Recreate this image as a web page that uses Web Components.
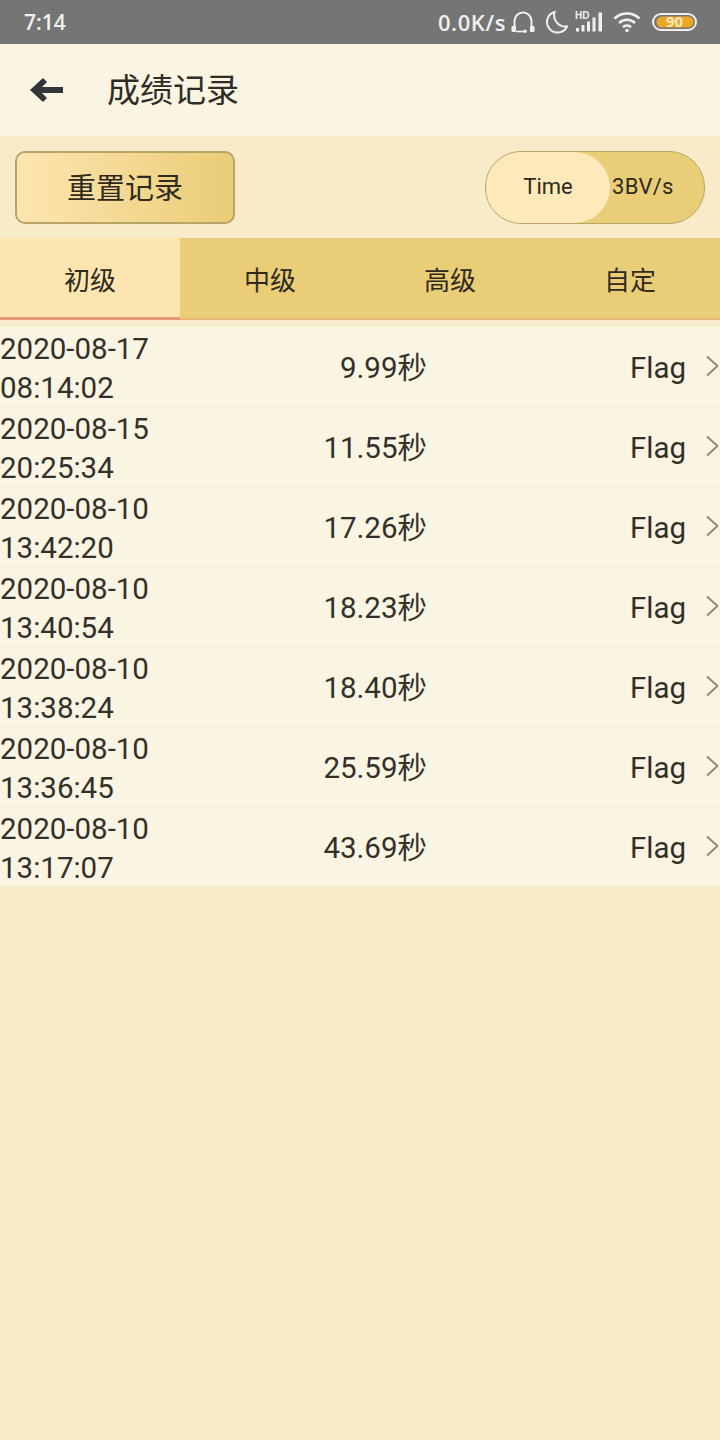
<!DOCTYPE html>
<html lang="zh">
<head>
<meta charset="utf-8">
<title>成绩记录</title>
<style>
  html, body { margin: 0; padding: 0; }
  body {
    width: 720px;
    height: 1440px;
    overflow: hidden;
    background: #f7ebc9;
    color: #2e2a20;
    font-family: Roboto, "Noto Sans CJK SC", sans-serif;
  }
</style>
</head>
<body>
<status-bar></status-bar>
<app-header>成绩记录</app-header>
<record-toolbar></record-toolbar>
<level-tabs></level-tabs>
<record-list>
  <record-row date="2020-08-17" time="08:14:02" score="9.99秒" mode="Flag"></record-row>
  <record-row date="2020-08-15" time="20:25:34" score="11.55秒" mode="Flag"></record-row>
  <record-row date="2020-08-10" time="13:42:20" score="17.26秒" mode="Flag"></record-row>
  <record-row date="2020-08-10" time="13:40:54" score="18.23秒" mode="Flag"></record-row>
  <record-row date="2020-08-10" time="13:38:24" score="18.40秒" mode="Flag"></record-row>
  <record-row date="2020-08-10" time="13:36:45" score="25.59秒" mode="Flag"></record-row>
  <record-row date="2020-08-10" time="13:17:07" score="43.69秒" mode="Flag"></record-row>
</record-list>

<script>
class StatusBar extends HTMLElement {
  constructor() {
    super();
    this.attachShadow({ mode: "open" });
    this.shadowRoot.innerHTML = `
      <style>
        :host {
          display: flex;
          align-items: center;
          justify-content: space-between;
          height: 44px;
          padding: 0 22px 0 24px;
          box-sizing: border-box;
          background: #757575;
          color: #f0f0f0;
          font-family: "Open Sans", Roboto, sans-serif;
          font-weight: 600;
        }
        .clock { font-size: 21px; }
        .right { display: flex; align-items: center; }
        .speed { font-size: 22px; letter-spacing: 0.6px; margin-right: 5px; }
        svg { display: block; flex: none; }
        .hp { margin-right: 10px; }
        .moon { margin-right: 7px; }
        .sig { margin-right: 10px; }
        .wifi { margin-right: 11px; }
      </style>
      <span class="clock">7:14</span>
      <div class="right">
        <span class="speed">0.0K/s</span>
        <svg class="hp" width="24" height="24" viewBox="0 0 24 24" fill="none" stroke="#f0f0f0" stroke-width="2">
          <path d="M3.500 17V11a8.500 8.500 0 0 1 17 0v6"/>
          <path d="M1 16.500h3.500v5H1zM19.500 16.500H23v5h-3.500z" fill="#f0f0f0" stroke-width="1"/>
          <path d="M5 21.500h8" stroke-width="1.600"/><circle cx="14" cy="21.200" r="1.800" fill="#f0f0f0" stroke="none"/>
        </svg>
        <svg class="moon" width="23" height="24" viewBox="0 0 23 24" fill="none" stroke="#f0f0f0" stroke-width="2">
          <path d="M9.500 2A10.500 10.500 0 1 0 22 16.500 11.500 11.500 0 0 1 9.500 2z"/>
        </svg>
        <svg class="sig" width="28" height="24" viewBox="0 0 28 24" fill="#f0f0f0">
          <path d="M1 18h3v3.500H1zM6.500 15h3v6.500h-3zM12 11.500h3v10h-3zM17.500 7.500h3v14h-3zM23.500 2.500h3.500v19h-3.500z"/>
          <text x="0" y="9" font-family="'Liberation Sans',sans-serif" font-size="10" font-weight="700">HD</text>
        </svg>
        <svg class="wifi" width="28" height="22" viewBox="0 0 28 22" fill="none" stroke="#f0f0f0" stroke-width="2.600">
          <path d="M1.500 7.500a18 18 0 0 1 25 0"/>
          <path d="M6 12a11.500 11.500 0 0 1 16 0"/>
          <path d="M10 16.200a5.800 5.800 0 0 1 8 0"/>
          <circle cx="14" cy="19.500" r="1.800" fill="#f0f0f0" stroke="none"/>
        </svg>
        <svg class="batt" width="46" height="20" viewBox="0 0 46 20">
          <rect x="1" y="2" width="43" height="16" rx="8" fill="none" stroke="#f0f0f0" stroke-width="2"/>
          <path d="M10 4.500h26a5.500 5.500 0 0 1 0 11H10a5.500 5.500 0 0 1 0-11z" fill="#eda623"/>
          <text x="22.500" y="15.300" text-anchor="middle" font-family="'Open Sans',sans-serif" font-size="15" font-weight="700" fill="#f8e8c0">90</text>
        </svg>
      </div>`;
  }
}

class AppHeader extends HTMLElement {
  constructor() {
    super();
    this.attachShadow({ mode: "open" });
    this.shadowRoot.innerHTML = `
      <style>
        :host {
          display: flex;
          align-items: center;
          height: 92px;
          background: #faf4e3;
        }
        svg { margin-left: 29px; flex: none; }
        .title {
          margin-left: 44px;
          margin-bottom: 4px;
          font: 33px/1 "Noto Sans CJK SC", sans-serif;
          color: #2e2c26;
        }
      </style>
      <svg width="34" height="28" viewBox="0 0 34 28" fill="#31363a">
        <path d="M14 2l4 4-5 5H34v6H13l5 5-4 4L1 14z"/>
      </svg>
      <span class="title"><slot></slot></span>`;
  }
}

class RecordToolbar extends HTMLElement {
  constructor() {
    super();
    this.attachShadow({ mode: "open" });
    this.shadowRoot.innerHTML = `
      <style>
        :host {
          display: flex;
          align-items: center;
          justify-content: space-between;
          height: 102px;
          padding: 0 15px;
          box-sizing: border-box;
          background: #f7ebc9;
        }
        button {
          width: 220px;
          height: 73px;
          box-sizing: border-box;
          padding: 0 0 2px;
          border: 2px solid #b9a468;
          border-radius: 10px;
          background: linear-gradient(90deg, #fde5b0, #eacd77);
          color: #2e2a1e;
          font: 29px/1 "Noto Sans CJK SC", sans-serif;
        }
      </style>
      <button>重置记录</button>
      <mode-toggle></mode-toggle>`;
  }
}

class ModeToggle extends HTMLElement {
  constructor() {
    super();
    this.attachShadow({ mode: "open" });
    this.shadowRoot.innerHTML = `
      <style>
        :host {
          display: flex;
          width: 220px;
          height: 73px;
          box-sizing: border-box;
          border: 1.500px solid #b9a468;
          border-radius: 36px;
          background: #eacd77;
          overflow: hidden;
          color: #2e2a1e;
          font: 22px/1 Roboto, sans-serif;
        }
        span { display: flex; align-items: center; }
        .on {
          width: 124px;
          justify-content: center;
          background: #fde9ba;
          border-radius: 0 36px 36px 0;
        }
        .off { flex: 1; padding-left: 2px; letter-spacing: 0.300px; }
      </style>
      <span class="on">Time</span>
      <span class="off">3BV/s</span>`;
  }
}

class LevelTabs extends HTMLElement {
  constructor() {
    super();
    this.attachShadow({ mode: "open" });
    const labels = ["初级", "中级", "高级", "自定"];
    this.shadowRoot.innerHTML = `
      <style>
        :host {
          display: grid;
          grid-template-columns: repeat(4, 1fr);
          height: 82px;
          margin-bottom: 7px;
          box-sizing: border-box;
          background: #eacd77;
          border-bottom: 2px solid #e8b77c;
        }
        div {
          display: flex;
          align-items: center;
          justify-content: center;
          padding-top: 2px;
          font: 26px/1 "Noto Sans CJK SC", sans-serif;
          color: #2e2a1e;
        }
        .active {
          background: #fde5b0;
          margin-bottom: -2px;
          border-bottom: 3px solid #e79a76;
        }
      </style>
      ${labels.map((t, i) => `<div class="${i === 0 ? "active" : ""}">${t}</div>`).join("")}`;
  }
}

class RecordList extends HTMLElement {
  constructor() {
    super();
    this.attachShadow({ mode: "open" });
    this.shadowRoot.innerHTML = `
      <style>
        :host { display: block; background: #faf4e3; }
      </style>
      <slot></slot>`;
  }
}

class RecordRow extends HTMLElement {
  constructor() {
    super();
    this.attachShadow({ mode: "open" });
    this.shadowRoot.innerHTML = `
      <style>
        :host {
          display: flex;
          align-items: center;
          height: 80px;
          padding-top: 2px;
          box-sizing: border-box;
          border-bottom: 1px solid #f3ead2;
          color: #33302a;
          font: 29.500px/40px Roboto, "Noto Sans CJK SC", sans-serif;
          background: #faf4e3;
        }
        :host(:last-child) { border-bottom: 0; height: 79px; }
        .date { width: 160px; box-sizing: border-box; padding-top: 2px; line-height: 39px; white-space: nowrap; }
        .score { width: 267px; text-align: right; white-space: nowrap; }
        .mode { width: 259px; text-align: right; }
        svg { margin: 0 0 3px 19px; flex: none; }
      </style>
      <div class="date"><div class="d"></div><div class="t"></div></div>
      <div class="score"></div>
      <div class="mode"></div>
      <svg width="14" height="24" viewBox="0 0 14 24" fill="none" stroke="#8f8a7e" stroke-width="2">
        <path d="M2 2.500l10.500 9.500-10.500 9.500"/>
      </svg>`;
  }

  connectedCallback() {
    const root = this.shadowRoot;
    root.querySelector(".d").textContent = this.getAttribute("date");
    root.querySelector(".t").textContent = this.getAttribute("time");
    root.querySelector(".score").textContent = this.getAttribute("score");
    root.querySelector(".mode").textContent = this.getAttribute("mode");
  }
}

customElements.define("status-bar", StatusBar);
customElements.define("app-header", AppHeader);
customElements.define("mode-toggle", ModeToggle);
customElements.define("record-toolbar", RecordToolbar);
customElements.define("level-tabs", LevelTabs);
customElements.define("record-list", RecordList);
customElements.define("record-row", RecordRow);
</script>
</body>
</html>
